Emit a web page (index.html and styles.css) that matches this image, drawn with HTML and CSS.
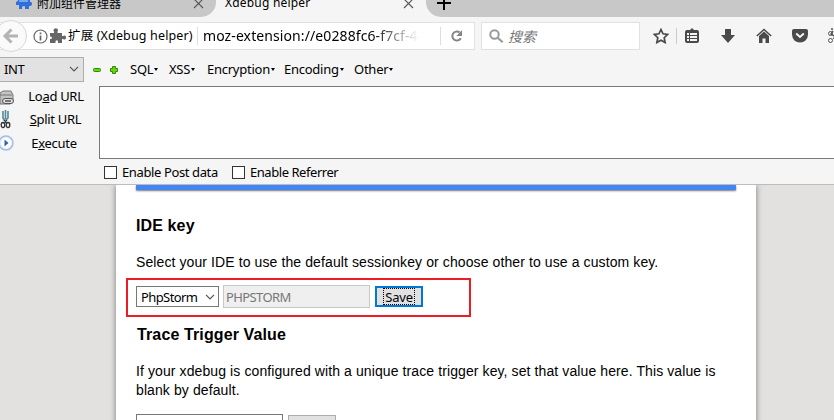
FILE: index.html
```html
<!DOCTYPE html>
<html lang="zh-CN">
<head>
<meta charset="utf-8">
<title>Xdebug helper</title>
<link rel="stylesheet" href="styles.css">
</head>
<body>
<div class="window">
  <div class="tabs">
    <div class="tab tab-addons">
      <svg class="tab-puzzle" width="16" height="16" viewBox="0 0 16 16"><path fill="#2f70dc" d="M1 5h4V4Q4 2 5 1q2-1 3 0 1 1 0 3v1h6v3h1q1 0 1 2t-2 2h-1v3H9v-2q0-1-1-1t-2 1v2H3v-4H0V8l2-1z"/><path fill="#75a9f3" d="M3 6h9v2H3z"/></svg>
      <span class="tab-title cjk">附加组件管理器</span>
      <svg class="close" width="12" height="12" viewBox="0 0 12 12"><path d="M1 1l9 9M10 1l-9 9"/></svg>
    </div>
    <div class="tab tab-active">
      <span class="tab-title">Xdebug helper</span>
      <svg class="close" width="12" height="12" viewBox="0 0 12 12"><path d="M1 1l9 9M10 1l-9 9"/></svg>
    </div>
    <div class="tab-rest">
      <svg width="14" height="14" viewBox="0 0 14 14"><path d="M7 0v14M0 7h14" stroke="#000" stroke-width="2"/></svg>
    </div>
  </div>

  <div class="nav">
    <div class="address">
      <svg class="back" width="28" height="32" viewBox="0 0 28 32"><circle cx="11" cy="16" r="15.5" fill="#fafafa" stroke="#d8d8d8"/><path d="M18 16H6M11.5 9.500L5 16l6.500 6.500" fill="none" stroke="#b3b3b3" stroke-width="3"/></svg>
      <svg class="info" width="15" height="15" viewBox="0 0 15 15"><circle cx="7.500" cy="7.500" r="6.500" fill="none" stroke="#666" stroke-width="1.200"/><path d="M7.500 6.500v5M7.500 3.500v1.700" stroke="#666" stroke-width="1.700"/></svg>
      <svg class="ext" width="16" height="16" viewBox="0 0 16 16"><path fill="#666" d="M0 5h4V3.500Q3 2 4 1q2-1.500 3.500 0 1 1 0 2.500V5H12v3h1q3-1.500 3 1.500t-3 1.500h-1v4H8v-2q-1-1.500-2.500 0v2H0v-4h1q2-1 0-2.500H0z"/></svg>
      <span class="identity">扩展 (Xdebug helper)</span>
      <span class="url">moz-extension://e0288fc6-f7cf-4</span>
      <span class="reload"><svg width="14" height="14" viewBox="0 0 14 14"><path d="M10.800 9.200A4.500 4.500 0 1 1 9.500 3.400" fill="none" stroke="#858585" stroke-width="2"/><path d="M12 1v6H6.500z" fill="#858585"/></svg></span>
    </div>
    <div class="search">
      <svg width="15" height="15" viewBox="0 0 15 15"><circle cx="5.500" cy="5.500" r="4.200" fill="none" stroke="#999" stroke-width="2"/><path d="M8.700 8.700l5 4.500" stroke="#999" stroke-width="2.200"/></svg>
      <span class="cjk">搜索</span>
    </div>
    <div class="tools">
      <svg width="16" height="16" viewBox="0 0 16 16"><path d="M8 1.500l2 4.300 4.700.6-3.500 3.300.9 4.800L8 12.200l-4.100 2.300.9-4.800L1.300 6.400 6 5.800z" fill="none" stroke="#4a4a4a" stroke-width="1.700"/></svg>
      <i class="sep"></i>
      <svg width="14" height="16" viewBox="0 0 14 16"><path fill="#4a4a4a" d="M5 2l2-2 2 2h3q2 0 2 2v9q0 2-2 2H2q-2 0-2-2V4q0-2 2-2z"/><path fill="#f5f5f5" d="M2 5h10v8H2z"/><path d="M2 7.500h10M2 10.500h10M4.500 5v8" stroke="#4a4a4a"/></svg>
      <svg class="download" width="16" height="16" viewBox="0 0 16 16"><path fill="#4a4a4a" d="M5 1h6v6h4l-7 8-7-8h4z"/></svg>
      <svg width="16" height="16" viewBox="0 0 16 16"><path d="M.8 8L8 1.500 15.200 8" fill="none" stroke="#4a4a4a" stroke-width="1.500"/><path fill="#4a4a4a" d="M3 8l5-4.500L13 8v7H9.500v-4.500h-3V15H3z"/></svg>
      <svg width="16" height="16" viewBox="0 0 16 16"><path fill="#4a4a4a" d="M2 1h12q2 0 2 2v3.500a8 8 0 0 1-16 0V3q0-2 2-2z"/><path d="M4.200 5.500L8 9l3.800-3.500" fill="none" stroke="#f5f5f5" stroke-width="2"/></svg>
      <svg width="16" height="16" viewBox="0 0 16 16"><path d="M3 1h2m2 0h2M5 3L3 6l3 2" stroke="#555" fill="none" stroke-width="1.500"/><circle cx="2.500" cy="5.500" r="2" fill="none" stroke="#555"/><circle cx="2.500" cy="12.500" r="2" fill="none" stroke="#555"/><path d="M5 11l3-4" stroke="#555"/></svg>
    </div>
  </div>

  <div class="hackbar">
    <div class="menus">
      <div class="mode"><span>INT</span><svg width="10" height="6" viewBox="0 0 10 6"><path d="M1 .8l4 4 4-4" fill="none" stroke="#555" stroke-width="1.200"/></svg></div>
      <svg class="minus" width="8" height="4" viewBox="0 0 8 4"><rect x=".5" y=".5" width="7" height="3" rx="1" fill="#65d80b" stroke="#328b08"/></svg>
      <svg class="plus" width="8" height="8" viewBox="0 0 8 8"><path d="M2.500.5h3v2h2v3h-2v2h-3v-2h-2v-3h2z" fill="#65d80b" stroke="#328b08"/></svg>
      <span class="menu sql">SQL</span><span class="menu xss">XSS</span><span class="menu encryption">Encryption</span><span class="menu encoding">Encoding</span><span class="menu other">Other</span>
    </div>
    <div class="request">
      <div class="actions">
        <div class="action load"><svg width="15" height="16" viewBox="0 0 15 16"><path d="M0 3l3-2h8l2 4v7l-3 2H0z" fill="#c3c3c3" stroke="#777"/><path d="M0 5h12" stroke="#777"/><rect x="2.500" y="8.500" width="11" height="5" rx="2.500" fill="#ddd" stroke="#555"/><path d="M5 11h6" stroke="#555" stroke-width="1.500"/></svg><span>Lo<u>a</u>d URL</span></div>
        <div class="action split"><svg width="15" height="20" viewBox="0 0 15 20"><path d="M3 2v7l2 3M8 2v7l-3 3M5.500 1v9" fill="none" stroke="#57889b" stroke-width="1.600"/><path d="M4 11l3 4M7 11l-3 4" stroke="#222"/><ellipse cx="3" cy="16" rx="1.800" ry="2.500" fill="none" stroke="#333" stroke-width="1.300"/><ellipse cx="8" cy="16" rx="1.800" ry="2.500" fill="none" stroke="#333" stroke-width="1.300"/></svg><span><u>S</u>plit URL</span></div>
        <div class="action execute"><svg width="15" height="16" viewBox="0 0 15 16"><circle cx="6" cy="8" r="7" fill="#e5edf8" stroke="#a7bce0" stroke-width="1.500"/><circle cx="6" cy="8" r="5" fill="#fff"/><path d="M4.500 4.500l4 3.500-4 3.500z" fill="#2864b8"/></svg><span>E<u>x</u>ecute</span></div>
      </div>
      <div class="url-field"></div>
    </div>
    <div class="options"><i class="check"></i><span class="post">Enable Post data</span><i class="check"></i><span class="referrer">Enable Referrer</span></div>
  </div>

  <div class="page">
    <div class="card">
      <div class="blue"></div>
      <h3 class="ide">IDE key</h3>
      <p class="help">Select your IDE to use the default sessionkey or choose other to use a custom key.</p>
      <div class="highlight">
        <div class="select"><span>PhpStorm</span><svg width="10" height="6" viewBox="0 0 10 6"><path d="M1 .8l4 4 4-4" fill="none" stroke="#555" stroke-width="1.200"/></svg></div>
        <div class="key">PHPSTORM</div>
        <div class="save"><span>Save</span></div>
      </div>
      <h3 class="trace">Trace Trigger Value</h3>
      <p class="trace-help">If your xdebug is configured with a unique trace trigger key, set that value here. This value is<br>blank by default.</p>
      <div class="trace-form"><div class="trace-input"></div><div class="trace-save"></div></div>
    </div>
  </div>
</div>
</body>
</html>
```
FILE: styles.css
```css
* { box-sizing: border-box; }
body { margin: 0; }
svg { display: block; flex: none; }
span { white-space: nowrap; }
.window { width: 834px; height: 420px; overflow: hidden; background: #f5f5f5; color: #000; font: 13px/18px "Noto Sans", "Noto Sans CJK SC", sans-serif; }
.cjk { font-family: "Noto Sans CJK SC", sans-serif; }

.tabs { display: flex; height: 17px; overflow: hidden; }
.tab { display: flex; height: 17px; align-items: flex-start; }
.tab-addons { width: 216px; padding-left: 16px; background: #c8c8c8; border-radius: 0 0 15px 0; }
.tab-puzzle { margin: -6px 5px 0 0; }
.tab-title { margin-top: -6px; }
.tab-addons .tab-title { width: 156px; font-size: 12px; }
.tab-active { width: 210px; padding-left: 9px; }
.tab-active .tab-title { width: 178px; font-size: 12px; letter-spacing: .2px; }
.close { margin-top: -2px; fill: none; stroke: #555; stroke-width: 1.1; }
.tab-rest { flex: 1; height: 17px; padding-left: 11px; background: #c8c8c8; border-radius: 0 0 0 15px; }
.tab-rest svg { margin-top: -4px; }

.nav { display: flex; height: 38px; padding-top: 5px; }
.address { display: flex; flex: none; width: 475px; height: 28px; align-items: center; background: #fff; border: 1px solid #e1e1e1; border-left: 0; }
.info { margin-left: 5px; }
.ext { margin-left: 2px; }
.identity { width: 130px; height: 18px; margin-left: 2px; font-size: 12.5px; letter-spacing: .15px; border-right: 1px solid #ddd; }
.url { width: 226px; height: 20px; line-height: 20px; margin-left: 5px; overflow: hidden; font-size: 14px; letter-spacing: .1px; -webkit-mask-image: linear-gradient(90deg, #000 168px, transparent 216px); mask-image: linear-gradient(90deg, #000 168px, transparent 216px); }
.reload { display: flex; height: 18px; padding-left: 9px; align-items: center; border-left: 1px solid #ddd; margin-left: 11px; }
.search { display: flex; flex: none; width: 159px; height: 28px; margin-left: 6px; padding-left: 7px; align-items: center; background: #fff; border: 1px solid #e1e1e1; color: #777; font-style: italic; font-size: 14px; }
.search span { margin-left: 4px; }
.tools { display: flex; flex: none; height: 28px; margin-left: 13px; align-items: center; gap: 20px; }
.sep { width: 1px; height: 16px; margin: 0 -12px 0 -13px; background: #c9c9c9; }
.download { margin-left: 1px; }

.hackbar { height: 130px; border-bottom: 1px solid #bcbcbc; }
.menus { display: flex; height: 31px; padding-top: 2px; align-items: flex-start; }
.mode { display: flex; width: 84px; height: 25px; padding: 0 4px 2px; align-items: center; justify-content: space-between; background: #e2e2e2; border: 1px solid #adadad; border-left: 0; letter-spacing: -.4px; }
.minus { margin: 11px 0 0 9px; }
.plus { margin: 9px 12px 0 9px; }
.menu { margin-top: 3px; letter-spacing: -.25px; }
.menu::after { content: ""; display: inline-block; margin-left: 1px; vertical-align: 3px; border: 2.500px solid transparent; border-top: 3px solid #000; border-bottom: 0; }
.sql { width: 39px; }
.xss { width: 38px; }
.encryption { width: 77px; }
.encoding { width: 70px; }
.request { display: flex; height: 73px; }
.actions { width: 99px; }
.action { display: flex; height: 23.500px; align-items: center; }
.action span { flex: 1; text-align: center; letter-spacing: -.3px; }
.load svg { margin-top: 0; }
.load span { margin: -4px 2px 0 0; }
.split svg { margin-top: -5px; }
.split span { margin: -4px 3px 0 0; }
.execute svg { margin-top: -3px; }
.execute span { margin: -4px 6px 0 0; }
.url-field { flex: 1; background: #fff; border: 1px solid #7a7a7a; border-right: 0; }
.options { display: flex; height: 25px; padding: 2px 0 0 104px; align-items: center; }
.check { width: 13px; height: 13px; background: #fff; border: 1px solid #333; }
.options span { margin: -1px 0 0 5px; }
.options .post { width: 110px; letter-spacing: -.38px; }
.options .referrer { letter-spacing: -.45px; }

.page { height: 235px; padding-left: 116px; overflow: hidden; background: #e2e1df; font: 14px/20px "Liberation Sans", sans-serif; }
.card { width: 640px; height: 260px; padding: 0 20px; background: #fff; box-shadow: 0 0 6px #777; clip-path: inset(0 -12px); }
.blue { height: 5px; background: #4285f4; box-shadow: 0 1px 2px #777; }
h3 { margin: 0; font-size: 16px; line-height: 20px; letter-spacing: .12px; }
.ide { margin-top: 26px; }
p { margin: 0; white-space: nowrap; letter-spacing: .1px; }
.help { margin-top: 16px; }
.highlight { display: flex; width: 345px; height: 39px; margin: 6px 0 0 -10px; padding: 6px 8px; align-items: flex-start; border: 2px solid #ed1c24; font: 13px/18px "Noto Sans", sans-serif; }
.select { display: flex; width: 83px; height: 21px; padding: 0 3px 0 4px; align-items: center; justify-content: space-between; border: 1px solid #777; letter-spacing: -.6px; }
.key { width: 147px; height: 23px; margin: -1px 0 0 4px; padding: 2px 2px; color: #777; background: #efefef; border: 1px solid #c8c8c8; letter-spacing: -.6px; }
.save { width: 48px; height: 21px; margin-left: 5px; padding: 0 6px; background: #e1e1e1; border: 2px solid #0078d7; }
.save span { display: block; height: 17px; border: 1px dotted #000; line-height: 17px; text-align: center; letter-spacing: -.2px; }
.trace { margin: 8px 0 0 1px; }
.trace-help { margin-top: 17px; line-height: 19px; }
.trace-form { display: flex; margin-top: 14px; gap: 5px; }
.trace-input { width: 147px; height: 23px; border: 1px solid #777; }
.trace-save { width: 48px; height: 21px; margin-top: 1px; background: #e1e1e1; border: 1px solid #adadad; }
```
